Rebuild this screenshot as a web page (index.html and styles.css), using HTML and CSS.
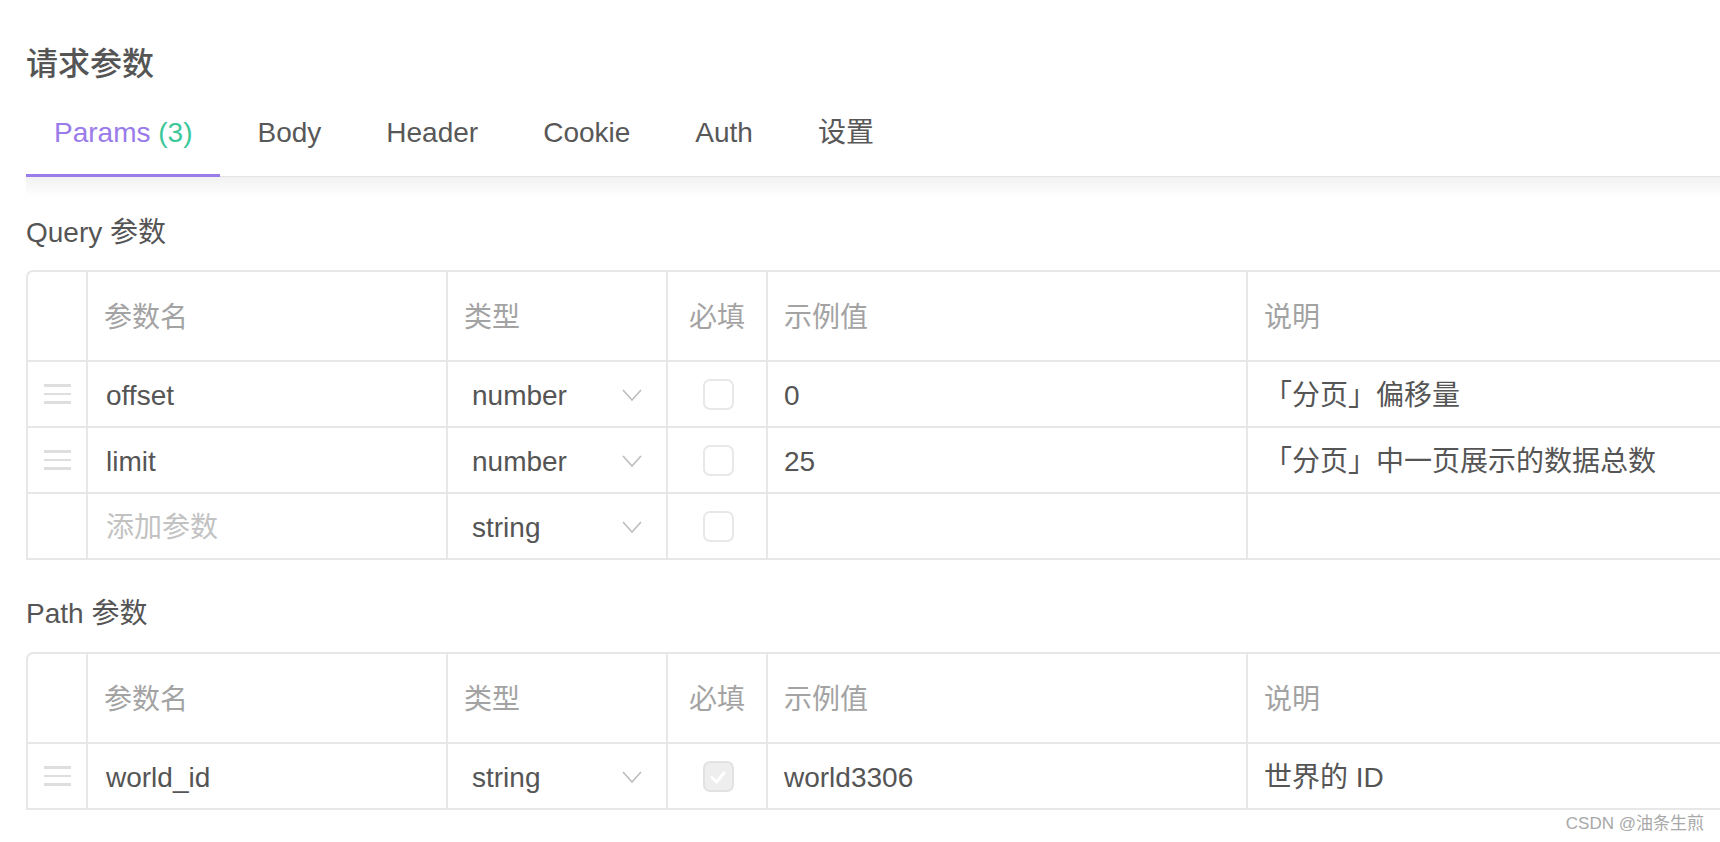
FILE: index.html
```html
<!DOCTYPE html>
<html lang="zh-CN">
<head>
<meta charset="utf-8">
<title>请求参数</title>
<link rel="stylesheet" href="styles.css">
</head>
<body>
<div class="page">
  <h2 class="title">请求参数</h2>
  <div class="tabs">
    <div class="tab active">Params <span class="count">(3)</span></div>
    <div class="tab">Body</div>
    <div class="tab">Header</div>
    <div class="tab">Cookie</div>
    <div class="tab">Auth</div>
    <div class="tab">设置</div>
  </div>
  <div class="tab-shadow"></div>

  <div class="section-label label-query">Query 参数</div>
  <div class="table">
    <div class="cell head"></div>
    <div class="cell head">参数名</div>
    <div class="cell head">类型</div>
    <div class="cell head center">必填</div>
    <div class="cell head">示例值</div>
    <div class="cell head">说明</div>

    <div class="cell row center"><span class="handle"><i></i><i></i><i></i></span></div>
    <div class="cell row name">offset</div>
    <div class="cell row select"><span>number</span><svg class="chev" viewBox="0 0 20 12" width="20" height="12"><polyline points="1,1 10,11 19,1"/></svg></div>
    <div class="cell row center"><span class="checkbox"></span></div>
    <div class="cell row">0</div>
    <div class="cell row">「分页」偏移量</div>

    <div class="cell row center"><span class="handle"><i></i><i></i><i></i></span></div>
    <div class="cell row name">limit</div>
    <div class="cell row select"><span>number</span><svg class="chev" viewBox="0 0 20 12" width="20" height="12"><polyline points="1,1 10,11 19,1"/></svg></div>
    <div class="cell row center"><span class="checkbox"></span></div>
    <div class="cell row">25</div>
    <div class="cell row">「分页」中一页展示的数据总数</div>

    <div class="cell row"></div>
    <div class="cell row name placeholder">添加参数</div>
    <div class="cell row select"><span>string</span><svg class="chev" viewBox="0 0 20 12" width="20" height="12"><polyline points="1,1 10,11 19,1"/></svg></div>
    <div class="cell row center"><span class="checkbox"></span></div>
    <div class="cell row"></div>
    <div class="cell row"></div>
  </div>

  <div class="section-label label-path">Path 参数</div>
  <div class="table">
    <div class="cell head"></div>
    <div class="cell head">参数名</div>
    <div class="cell head">类型</div>
    <div class="cell head center">必填</div>
    <div class="cell head">示例值</div>
    <div class="cell head">说明</div>

    <div class="cell row center"><span class="handle"><i></i><i></i><i></i></span></div>
    <div class="cell row name">world_id</div>
    <div class="cell row select"><span>string</span><svg class="chev" viewBox="0 0 20 12" width="20" height="12"><polyline points="1,1 10,11 19,1"/></svg></div>
    <div class="cell row center"><span class="checkbox checked"><svg viewBox="0 0 20 20" width="20" height="20"><polyline points="4,10.5 8.5,15 16,6"/></svg></span></div>
    <div class="cell row">world3306</div>
    <div class="cell row">世界的 ID</div>
  </div>
</div>
<div class="watermark">CSDN @油条生煎</div>
</body>
</html>
```

FILE: styles.css
```css
html, body {
  margin: 0;
  padding: 0;
  background: #ffffff;
  overflow: hidden;
}

body {
  width: 1720px;
  height: 842px;
  position: relative;
  font-family: "Liberation Sans", "Noto Sans CJK SC", sans-serif;
  color: #555555;
}

.page {
  width: 1860px;
  padding-left: 26px;
}

.title {
  margin: 44px 0 0 0;
  font-size: 32px;
  line-height: 40px;
  font-weight: 500;
  color: #555555;
}

.tabs {
  display: flex;
  gap: 9px;
  padding-top: 29px;
  border-bottom: 1px solid #e4e4e4;
}

.tab {
  padding: 0 28px 21px 28px;
  font-size: 28px;
  line-height: 40px;
  color: #585858;
  border-bottom: 3px solid transparent;
  margin-bottom: -1px;
}

.tab.active {
  color: #9a7bea;
  border-bottom-color: #9a7bea;
}

.tab .count {
  color: #3cc79b;
}

.tab-shadow {
  height: 20px;
  background: linear-gradient(rgba(0, 0, 0, 0.055), rgba(0, 0, 0, 0));
}

.section-label {
  font-size: 28px;
  line-height: 36px;
  color: #555555;
}

.label-query {
  margin-top: 18px;
  margin-bottom: 19px;
}

.label-path {
  margin-top: 36px;
  margin-bottom: 20px;
}

.table {
  display: grid;
  grid-template-columns: 60px 360px 220px 100px 480px 1fr;
  border-top: 2px solid #e7e7e7;
  border-left: 2px solid #e7e7e7;
  border-top-left-radius: 7px;
}

.cell {
  box-sizing: border-box;
  border-right: 2px solid #e7e7e7;
  border-bottom: 2px solid #e7e7e7;
  display: flex;
  align-items: center;
  padding: 4px 16px 0 16px;
  font-size: 28px;
  line-height: 36px;
  white-space: nowrap;
  color: #555555;
}

.cell.head {
  height: 90px;
  color: #a3a3a3;
}

.cell.row {
  height: 66px;
}

.cell.center {
  justify-content: center;
  padding: 4px 0 0 0;
}

.cell.name {
  padding-left: 18px;
}

.cell.placeholder {
  color: #c2c2c2;
}

.cell.select {
  justify-content: space-between;
  padding: 4px 24px 0 24px;
}

.chev {
  fill: none;
  stroke: #bdbdbd;
  stroke-width: 1.6;
  margin-top: -2px;
}

.checkbox {
  box-sizing: border-box;
  width: 31px;
  height: 31px;
  border: 2px solid #e8e8e8;
  border-radius: 7px;
  background: #ffffff;
  margin-top: -3px;
  margin-left: 2px;
  display: flex;
  align-items: center;
  justify-content: center;
}

.checkbox.checked {
  background: #eeeeef;
  border-color: #e2e2e4;
}

.checkbox svg {
  fill: none;
  stroke: #ffffff;
  stroke-width: 3;
  stroke-linecap: round;
  stroke-linejoin: round;
}

.handle {
  display: flex;
  flex-direction: column;
  gap: 6px;
  width: 27px;
  margin-top: -4px;
  margin-left: 1px;
}

.handle i {
  display: block;
  height: 2.5px;
  background: #dedede;
}

.watermark {
  position: absolute;
  right: 16px;
  bottom: 8px;
  font-size: 17px;
  line-height: 20px;
  color: #a8a8a8;
}
```
